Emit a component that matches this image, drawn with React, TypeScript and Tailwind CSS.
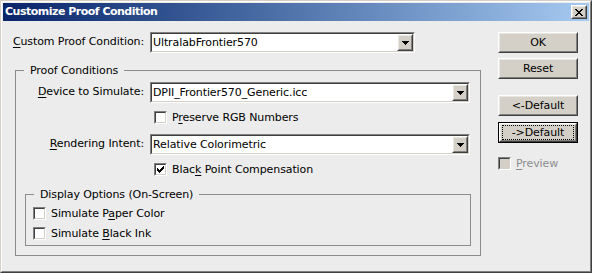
import type { ReactNode } from "react";

const raisedOuter = "border border-t-white border-l-white border-r-[#404040] border-b-[#404040]";
const raisedInner = "border border-t-[#e8e6e0] border-l-[#e8e6e0] border-r-[#808080] border-b-[#808080]";
const sunkOuter = "border border-t-[#808080] border-l-[#808080] border-r-white border-b-white";
const sunkInner = "border border-t-[#404040] border-l-[#404040] border-r-[#d4d0c8] border-b-[#d4d0c8]";

function U({ children }: { children: ReactNode }) {
  return <span className="underline underline-offset-[2px]">{children}</span>;
}

function Combo({ value, className }: { value: string; className: string }) {
  return (
    <div className={`h-[21px] ${sunkOuter} ${className}`}>
      <div className={`flex h-full bg-white ${sunkInner}`}>
        <span className="flex-1 truncate pl-[1px] leading-[18px]">{value}</span>
        <div className={`h-[17px] w-[16px] bg-[#d4d0c8] ${raisedOuter}`}>
          <div className={`flex h-full items-center justify-center ${raisedInner}`}>
            {/* classic down arrow */}
            <svg width="7" height="4" viewBox="0 0 7 4" shapeRendering="crispEdges">
              <rect x="0" y="0" width="7" height="1" fill="#000" />
              <rect x="1" y="1" width="5" height="1" fill="#000" />
              <rect x="2" y="2" width="3" height="1" fill="#000" />
              <rect x="3" y="3" width="1" height="1" fill="#000" />
            </svg>
          </div>
        </div>
      </div>
    </div>
  );
}

function Check({ checked, disabled }: { checked?: boolean; disabled?: boolean }) {
  return (
    <div className={`h-[13px] w-[13px] shrink-0 ${sunkOuter}`}>
      <div className={`h-full p-[1px] ${sunkInner} ${disabled ? "bg-[#d4d0c8]" : "bg-white"}`}>
        {checked && (
          <svg width="7" height="7" viewBox="0 0 7 7" shapeRendering="crispEdges">
            <rect x="0" y="2" width="1" height="3" fill="#000" />
            <rect x="1" y="3" width="1" height="3" fill="#000" />
            <rect x="2" y="4" width="1" height="3" fill="#000" />
            <rect x="3" y="3" width="1" height="3" fill="#000" />
            <rect x="4" y="2" width="1" height="3" fill="#000" />
            <rect x="5" y="1" width="1" height="3" fill="#000" />
            <rect x="6" y="0" width="1" height="3" fill="#000" />
          </svg>
        )}
      </div>
    </div>
  );
}

function Btn({ label, focused, className = "" }: { label: string; focused?: boolean; className?: string }) {
  const face = (
    <div className={`h-full bg-[#d4d0c8] ${raisedOuter}`}>
      <div className={`flex h-full items-center justify-center ${raisedInner}`}>
        {focused ? (
          <span className="flex h-[15px] w-[72px] items-center justify-center border border-dotted border-black leading-[13px]">
            {label}
          </span>
        ) : (
          <span className="leading-[13px]">{label}</span>
        )}
      </div>
    </div>
  );
  return (
    <div className={`h-[21px] w-[80px] ${className}`}>
      {focused ? <div className="h-full border border-black">{face}</div> : face}
    </div>
  );
}

function CheckRow({ children, checked, className = "" }: { children: ReactNode; checked?: boolean; className?: string }) {
  return (
    <div className={`flex h-[13px] items-center gap-[5px] ${className}`}>
      <Check checked={checked} />
      <span className="leading-[13px]">{children}</span>
    </div>
  );
}

export default function App() {
  return (
    <div className="h-[273px] w-[592px] bg-[#ececec] font-['DejaVu_Sans',sans-serif] text-[11px] tracking-[-0.1px] text-black">
      <div className="h-full border border-t-[#d4d0c8] border-l-[#d4d0c8] border-r-[#404040] border-b-[#404040]">
        <div className="h-full border border-t-white border-l-white border-r-[#808080] border-b-[#808080] p-[1px]">
          {/* Title bar */}
          <div className="flex h-[18px] items-center bg-gradient-to-r from-[#0a246a] to-[#a6caf0] pl-[2px] pr-[2px]">
            <span className="flex-1 text-[11px] font-bold leading-[18px] tracking-[-0.5px] text-white">
              Customize Proof Condition
            </span>
            <div className={`h-[14px] w-[16px] bg-[#d4d0c8] ${raisedOuter}`}>
              <div className={`flex h-full items-center justify-center ${raisedInner}`}>
                <svg width="8" height="7" viewBox="0 0 8 7" shapeRendering="crispEdges">
                  <rect x="0" y="0" width="2" height="1" fill="#000" />
                  <rect x="6" y="0" width="2" height="1" fill="#000" />
                  <rect x="1" y="1" width="2" height="1" fill="#000" />
                  <rect x="5" y="1" width="2" height="1" fill="#000" />
                  <rect x="2" y="2" width="4" height="1" fill="#000" />
                  <rect x="3" y="3" width="2" height="1" fill="#000" />
                  <rect x="2" y="4" width="4" height="1" fill="#000" />
                  <rect x="1" y="5" width="2" height="1" fill="#000" />
                  <rect x="5" y="5" width="2" height="1" fill="#000" />
                  <rect x="0" y="6" width="2" height="1" fill="#000" />
                  <rect x="6" y="6" width="2" height="1" fill="#000" />
                </svg>
              </div>
            </div>
          </div>

          {/* Body */}
          <div className="flex pl-[9px]">
            <div className="w-[469px]">
              <div className="mt-[11px] flex items-center">
                <span className="w-[132px] text-right">
                  <U>C</U>ustom Proof Condition:
                </span>
                <Combo value="UltralabFrontier570" className="ml-[6px] w-[265px]" />
              </div>

              <fieldset className="ml-[3px] mt-[11px] h-[192px] w-[466px] border border-[#8c8c8c]">
                <legend className="ml-[8px] px-[6px] leading-[13px]">Proof Conditions</legend>
                <div className="mt-[5px] flex items-center">
                  <span className="w-[128px] text-right">
                    <U>D</U>evice to Simulate:
                  </span>
                  <Combo value="DPII_Frontier570_Generic.icc" className="ml-[6px] w-[320px]" />
                </div>
                <CheckRow className="ml-[138px] mt-[8px]">
                  P<U>r</U>eserve RGB Numbers
                </CheckRow>
                <div className="mt-[10px] flex items-center">
                  <span className="w-[128px] text-right">
                    <U>R</U>endering Intent:
                  </span>
                  <Combo value="Relative Colorimetric" className="ml-[6px] w-[320px]" />
                </div>
                <CheckRow checked className="ml-[138px] mt-[8px]">
                  Blac<U>k</U> Point Compensation
                </CheckRow>

                <fieldset className="ml-[9px] mt-[12px] h-[58px] w-[446px] border border-[#8c8c8c]">
                  <legend className="ml-[8px] px-[6px] leading-[13px]">Display Options (On-Screen)</legend>
                  <CheckRow className="ml-[7px] mt-[6px]">
                    Simulate P<U>a</U>per Color
                  </CheckRow>
                  <CheckRow className="ml-[7px] mt-[7px]">
                    Simulate <U>B</U>lack Ink
                  </CheckRow>
                </fieldset>
              </fieldset>
            </div>

            <div className="ml-[17px] flex w-[80px] flex-col">
              <Btn label="OK" className="mt-[11px]" />
              <Btn label="Reset" className="mt-[5px]" />
              <Btn label="<-Default" className="mt-[16px]" />
              <Btn label="->Default" focused className="mt-[6px]" />
              <div className="mt-[14px] flex h-[13px] items-center gap-[5px]">
                <Check disabled />
                <span className="leading-[13px] text-[#8d8d8d]">
                  <U>P</U>review
                </span>
              </div>
            </div>
          </div>
        </div>
      </div>
    </div>
  );
}
